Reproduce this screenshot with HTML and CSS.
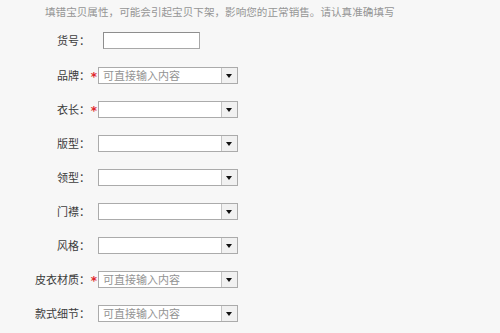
FILE: index.html
```html
<!DOCTYPE html>
<html lang="zh-CN">
  <head>
    <meta charset="UTF-8" />
    <meta name="viewport" content="width=device-width, initial-scale=1.0" />
    <title>宝贝属性</title>
    <link rel="stylesheet" href="styles.css">
  </head>
  <body>
    <div class="props">
      <p class="tip">填错宝贝属性，可能会引起宝贝下架，影响您的正常销售。请认真准确填写</p>

      <!-- 货号 -->
      <div class="row row-first">
        <label class="name">货号：</label>
        <span class="star"></span>
        <input class="text-input" type="text">
      </div>

      <div class="row">
        <label class="name">品牌：</label>
        <span class="star">*</span>
        <div class="combo"><span class="combo-text">可直接输入内容</span><span class="combo-btn"></span></div>
      </div>

      <div class="row">
        <label class="name">衣长：</label>
        <span class="star">*</span>
        <div class="combo"><span class="combo-text"></span><span class="combo-btn"></span></div>
      </div>

      <div class="row">
        <label class="name">版型：</label>
        <span class="star"></span>
        <div class="combo"><span class="combo-text"></span><span class="combo-btn"></span></div>
      </div>

      <div class="row">
        <label class="name">领型：</label>
        <span class="star"></span>
        <div class="combo"><span class="combo-text"></span><span class="combo-btn"></span></div>
      </div>

      <div class="row">
        <label class="name">门襟：</label>
        <span class="star"></span>
        <div class="combo"><span class="combo-text"></span><span class="combo-btn"></span></div>
      </div>

      <div class="row">
        <label class="name">风格：</label>
        <span class="star"></span>
        <div class="combo"><span class="combo-text"></span><span class="combo-btn"></span></div>
      </div>

      <div class="row">
        <label class="name">皮衣材质：</label>
        <span class="star">*</span>
        <div class="combo"><span class="combo-text">可直接输入内容</span><span class="combo-btn"></span></div>
      </div>

      <div class="row">
        <label class="name">款式细节：</label>
        <span class="star"></span>
        <div class="combo"><span class="combo-text">可直接输入内容</span><span class="combo-btn"></span></div>
      </div>
    </div>
  </body>
</html>
```

FILE: styles.css
```css
html, body {
  margin: 0;
  padding: 0;
  background: #f7f7f7;
}

body {
  font-family: "Noto Sans CJK SC", "DejaVu Sans", sans-serif;
  font-size: 11px;
  color: #444;
}

.props {
  padding-top: 5px;
}

/* 顶部提示 */
.tip {
  margin: 0 0 3px 45px;
  font-size: 10.6px;
  line-height: 14px;
  color: #959595;
  white-space: nowrap;
}

/* 每一行属性 */
.row {
  display: flex;
  align-items: center;
  height: 34px;
}
.row-first {
  height: 36px;
}

.name {
  width: 90px;
  text-align: right;
  color: #3c3c3c;
  white-space: nowrap;
}

.star {
  width: 8px;
  height: 17px;
  text-align: center;
  color: #e0262b;
  font-family: "DejaVu Sans", sans-serif;
  font-size: 12px;
  font-weight: bold;
  line-height: 21px;
  overflow: hidden;
}

.text-input {
  margin: 0 0 0 5px;
  padding: 0;
  width: 97px;
  height: 17px;
  box-sizing: border-box;
  border: 1px solid #a8a8a8;
  border-top-color: #8e8e8e;
  border-left-color: #8e8e8e;
  background: #fff;
}

/* 下拉框 */
.combo {
  display: flex;
  width: 140px;
  height: 17px;
  box-sizing: border-box;
  border: 1px solid #ababab;
  background: #fff;
}
.combo-text {
  flex: 1;
  padding-left: 4px;
  line-height: 15px;
  color: #939393;
  white-space: nowrap;
  overflow: hidden;
}
.combo-btn {
  position: relative;
  width: 15px;
  border-left: 1px solid #c4c4c4;
  background: #f1f1f1;
}
.combo-btn:after {
  content: "";
  position: absolute;
  left: 4px;
  top: 6px;
  border-left: 3.5px solid transparent;
  border-right: 3.5px solid transparent;
  border-top: 4px solid #111;
}
```
